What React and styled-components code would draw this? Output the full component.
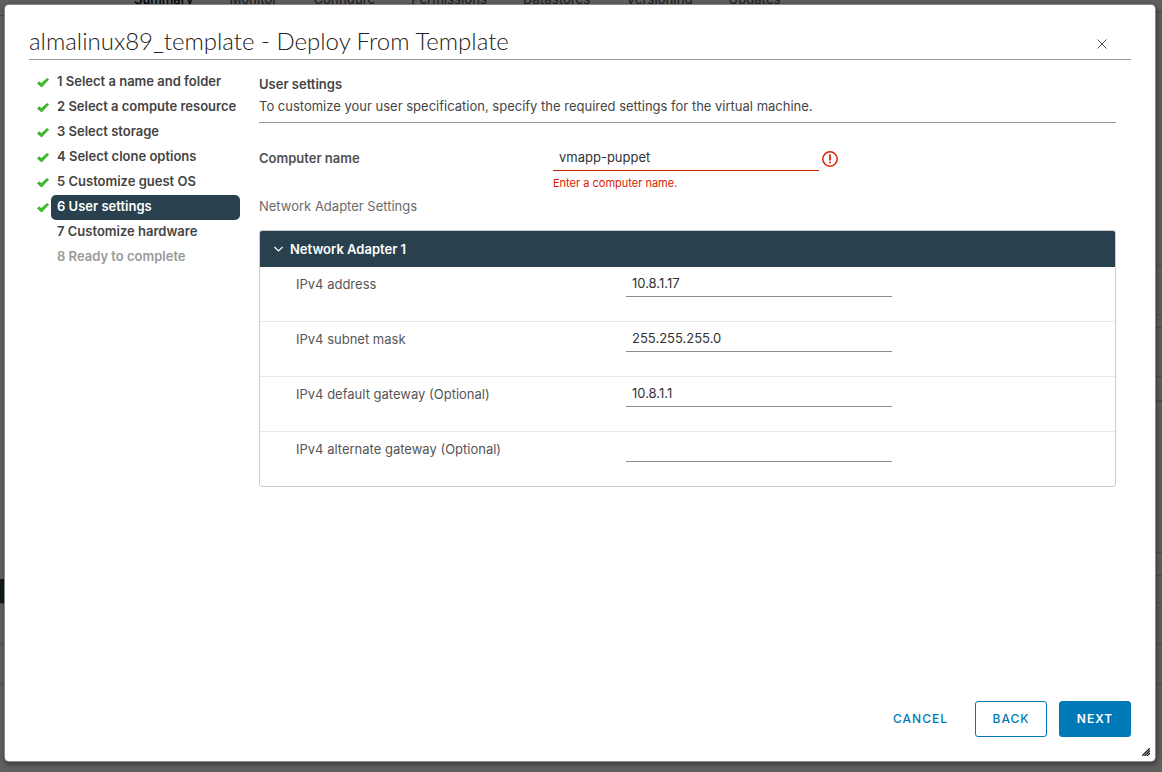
import React, { useState } from "react";
import styled, { createGlobalStyle, css } from "styled-components";

const GlobalStyle = createGlobalStyle`
  *, *::before, *::after { box-sizing: border-box; }
  body {
    margin: 0;
    background: #606060;
    color: #454545;
    font: 400 13px/24px Inter, "Open Sans", sans-serif;
  }
  button, input { font: inherit; color: inherit; margin: 0; }
`;

const Screen = styled.div`
  min-height: 100vh;
  position: relative;
  display: flex;
`;

const Behind = styled.div`
  position: absolute;
  inset: 0;
  overflow: hidden;
  display: flex;
  justify-content: space-between;
  z-index: 0;
`;

const Rail = styled.div`
  width: 60px;
  flex: none;
`;

const Band = styled.div`
  height: ${(p) => p.$h}px;
  border-bottom: ${(p) => p.$line ?? 1}px solid #4d4d4d;
  background: ${(p) => (p.$dark ? "#10191d" : "transparent")};
`;

const BehindTabs = styled.nav`
  flex: 1;
  height: 12px;
  display: flex;
  align-items: flex-end;
  gap: 36px;
  padding: 0 0 5px 74px;
  font-weight: 500;
  line-height: 16px;
`;

const BehindTab = styled.span`
  color: ${(p) => (p.$active ? "#000" : "#242424")};
`;

const Dialog = styled.section`
  position: relative;
  z-index: 1;
  flex: 1;
  display: flex;
  flex-direction: column;
  margin: 5px 7px 11px 5px;
  padding: 24px;
  background: #fff;
  border-radius: 4px;
  box-shadow: 0 0 0 1px #8a8a8a, 1px 2px 5px 2px rgba(0, 0, 0, 0.35);
`;

const Header = styled.header`
  display: flex;
  align-items: center;
  justify-content: space-between;
  height: 31px;
  padding-right: 20px;
  border-bottom: 1px solid #9a9a9a;
`;

const Title = styled.h1`
  margin: 0;
  padding-bottom: 6px;
  font: 300 24px/28px Lato, sans-serif;
  color: #222;
`;

const CloseButton = styled.button`
  display: flex;
  padding: 4px;
  border: 0;
  background: none;
  color: #555;
`;

const Body = styled.div`
  flex: 1;
  display: grid;
  grid-template-columns: 211px 1fr;
  gap: 19px;
  padding-right: 15px;
`;

const Steps = styled.ol`
  list-style: none;
  margin: 0;
  padding: 10px 0 0 8px;
`;

const Step = styled.li`
  display: grid;
  grid-template-columns: 14px 1fr;
  align-items: center;
  height: 25px;
`;

const StepButton = styled.button`
  grid-column: 2;
  height: 25px;
  padding: 0 6px 3px;
  border: 0;
  border-radius: 5px;
  background: none;
  text-align: left;
  white-space: nowrap;
  line-height: 22px;
  font-weight: 600;
  color: #444;
  &:disabled { color: #9a9a9a; }
  ${(p) => p.$active && css`
    background: #29414e;
    color: #fff;
  `}
`;

const Panel = styled.main`
  padding-top: 12px;
`;

const Intro = styled.div`
  height: 51px;
  border-bottom: 1px solid #9a9a9a;
  line-height: 20px;
`;

const PanelTitle = styled.h2`
  margin: 0;
  font-size: 13px;
  font-weight: 600;
  line-height: 24px;
  color: #454545;
`;

const NameField = styled.div`
  display: grid;
  grid-template-columns: 294px 1fr;
  padding-top: 23px;
`;

const NameLabel = styled.label`
  font-weight: 600;
  color: #505050;
`;

const InputLine = styled.div`
  display: flex;
  align-items: center;
  gap: 2px;
`;

const TextInput = styled.input`
  width: 266px;
  height: 25px;
  padding: 0 6px 2px;
  border: 0;
  border-bottom: 1px solid ${(p) => (p.$invalid ? "#c92100" : "#8c8c8c")};
  border-radius: 0;
  outline: 0;
  background: none;
  color: #333;
`;

const ErrorText = styled.div`
  font-size: 11px;
  color: #db2100;
`;

const SectionLabel = styled.h3`
  margin: 0;
  font-size: 13px;
  font-weight: 400;
  line-height: 22px;
  color: #6a6a6a;
`;

const Adapter = styled.section`
  margin-top: 13px;
  border: 1px solid #ccc;
  border-radius: 3px;
  overflow: hidden;
`;

const AdapterHeader = styled.button`
  display: flex;
  align-items: center;
  gap: 6px;
  width: 100%;
  height: 36px;
  padding: 0 13px 1px;
  border: 0;
  background: #29414e;
  color: #fff;
  font-weight: 600;
`;

const AdapterRow = styled.div`
  display: grid;
  grid-template-columns: 330px 1fr;
  align-items: start;
  height: 55px;
  padding: 5px 0 0 36px;
  border-bottom: 1px solid #e8e8e8;
  &:last-child {
    height: 54px;
    border-bottom: 0;
  }
`;

const RowLabel = styled.label`
  color: #565656;
`;

const Footer = styled.footer`
  display: flex;
  justify-content: flex-end;
  gap: 12px;
`;

const Button = styled.button`
  height: 36px;
  min-width: 72px;
  padding: 0 14px;
  border: 1px solid ${(p) => (p.$kind === "link" ? "transparent" : "#0079b8")};
  border-radius: 3px;
  background: ${(p) => (p.$kind === "primary" ? "#0079b8" : "transparent")};
  color: ${(p) => (p.$kind === "primary" ? "#fff" : "#0079b8")};
  font-size: 12px;
  font-weight: ${(p) => (p.$kind === "primary" ? 600 : 500)};
  letter-spacing: 1px;
`;

const ResizeGrip = styled.svg`
  position: absolute;
  right: 5px;
  bottom: 5px;
`;

const CheckIcon = () => (
  <svg width="12" height="12" viewBox="0 0 12 12" aria-hidden="true">
    <path d="M0.5 6.4 2.2 4.8 4.4 6.6 10 1.6 11.6 2.6 4.6 10Z" fill="#3cc427" stroke="#1f8f14" strokeWidth="0.7" />
  </svg>
);

const ErrorIcon = () => (
  <svg width="18" height="18" viewBox="0 0 18 18" role="img" aria-label="Error">
    <circle cx="9" cy="9" r="7.2" fill="none" stroke="#db2100" strokeWidth="1.5" />
    <path d="M9 5.2V9.8" stroke="#db2100" strokeWidth="1.8" strokeLinecap="round" />
    <circle cx="9" cy="12.4" r="1" fill="#db2100" />
  </svg>
);

const CloseIcon = () => (
  <svg width="10" height="10" viewBox="0 0 10 10" aria-hidden="true">
    <path d="M0.5 0.5 9.5 9.5M9.5 0.5 0.5 9.5" stroke="currentColor" strokeWidth="1" />
  </svg>
);

const CaretIcon = () => (
  <svg width="11" height="10" viewBox="0 0 11 10" aria-hidden="true">
    <path d="M1.4 3 5.5 7 9.6 3" fill="none" stroke="currentColor" strokeWidth="1.1" />
  </svg>
);

const steps = [
  ["Select a name and folder", "done"],
  ["Select a compute resource", "done"],
  ["Select storage", "done"],
  ["Select clone options", "done"],
  ["Customize guest OS", "done"],
  ["User settings", "active"],
  ["Customize hardware", "next"],
  ["Ready to complete", "locked"],
];

const adapterFields = [
  ["address", "IPv4 address", "10.8.1.17"],
  ["mask", "IPv4 subnet mask", "255.255.255.0"],
  ["gateway", "IPv4 default gateway (Optional)", "10.8.1.1"],
  ["alternate", "IPv4 alternate gateway (Optional)", ""],
];

const tabs = ["Summary", "Monitor", "Configure", "Permissions", "Datastores", "Versioning", "Updates"];

const leftBands = [{ h: 16 }, { h: 563, line: 0 }, { h: 25, dark: true }, { h: 40 }, { h: 41 }];
const rightBands = [{ h: 13 }, { h: 253 }, { h: 49 }, { h: 13 }, { h: 49 }, { h: 25, line: 2 }, { h: 151 }, { h: 23 }, { h: 27 }, { h: 41 }, { h: 40 }];

const Bands = ({ items }) => (
  <Rail>
    {items.map((b, i) => <Band key={i} $h={b.h} $line={b.line} $dark={b.dark} />)}
  </Rail>
);

export default function App() {
  const [open, setOpen] = useState(true);
  return (
    <Screen>
      <GlobalStyle />
      <Behind aria-hidden="true">
        <Bands items={leftBands} />
        <BehindTabs>
          {tabs.map((t, i) => <BehindTab key={t} $active={i === 0}>{t}</BehindTab>)}
        </BehindTabs>
        <Bands items={rightBands} />
      </Behind>
      <Dialog role="dialog" aria-labelledby="dialog-title">
        <Header>
          <Title id="dialog-title">almalinux89_template - Deploy From Template</Title>
          <CloseButton type="button" aria-label="Close"><CloseIcon /></CloseButton>
        </Header>
        <Body>
          <Steps>
            {steps.map(([name, state], i) => (
              <Step key={name}>
                {(state === "done" || state === "active") && <CheckIcon />}
                <StepButton type="button" $active={state === "active"} disabled={state === "locked"}>
                  {`${i + 1} ${name}`}
                </StepButton>
              </Step>
            ))}
          </Steps>
          <Panel>
            <Intro>
              <PanelTitle>User settings</PanelTitle>
              To customize your user specification, specify the required settings for the virtual machine.
            </Intro>
            <NameField>
              <NameLabel htmlFor="computer-name">Computer name</NameLabel>
              <div>
                <InputLine>
                  <TextInput id="computer-name" defaultValue="vmapp-puppet" $invalid aria-describedby="name-error" />
                  <ErrorIcon />
                </InputLine>
                <ErrorText id="name-error">Enter a computer name.</ErrorText>
              </div>
            </NameField>
            <SectionLabel>Network Adapter Settings</SectionLabel>
            <Adapter>
              <AdapterHeader type="button" aria-expanded={open} onClick={() => setOpen(!open)}>
                <CaretIcon />
                Network Adapter 1
              </AdapterHeader>
              {open && adapterFields.map(([id, label, value]) => (
                <AdapterRow key={id}>
                  <RowLabel htmlFor={id}>{label}</RowLabel>
                  <TextInput id={id} defaultValue={value} />
                </AdapterRow>
              ))}
            </Adapter>
          </Panel>
        </Body>
        <Footer>
          <Button type="button" $kind="link">CANCEL</Button>
          <Button type="button">BACK</Button>
          <Button type="button" $kind="primary">NEXT</Button>
        </Footer>
        <ResizeGrip width="8" height="8" viewBox="0 0 8 8" aria-hidden="true">
          <path d="M0 8 8 0M2.5 8 8 2.5M5 8 8 5" stroke="#222" strokeWidth="1.3" />
        </ResizeGrip>
      </Dialog>
    </Screen>
  );
}
